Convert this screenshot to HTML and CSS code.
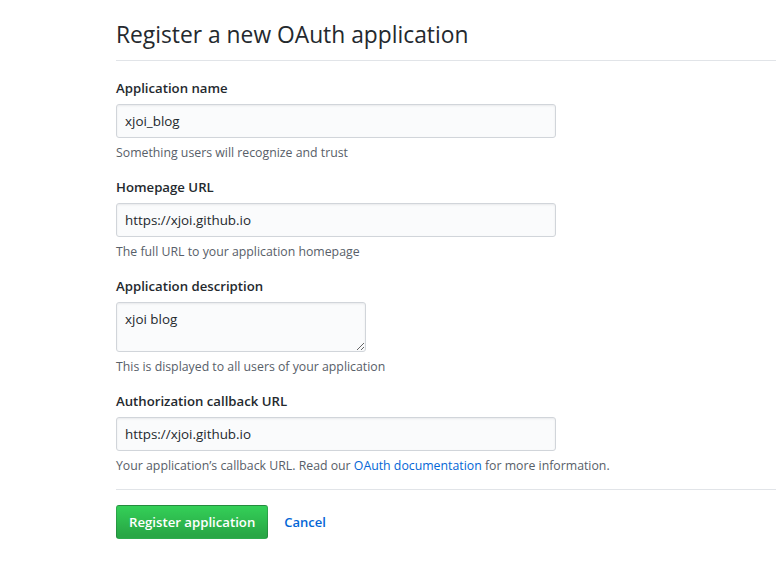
FILE: index.html
```html
<!DOCTYPE html>
<html>
<head>
<meta charset="utf-8">
<link rel="stylesheet" href="styles.css">
</head>
<body>
<div class="page">
  <h1 class="subhead">Register a new OAuth application</h1>
  <form class="form">
    <div class="group">
      <label class="label">Application name</label>
      <input class="control" type="text" value="xjoi_blog">
      <p class="note">Something users will recognize and trust</p>
    </div>
    <div class="group">
      <label class="label">Homepage URL</label>
      <input class="control" type="text" value="https://xjoi.github.io">
      <p class="note">The full URL to your application homepage</p>
    </div>
    <div class="group">
      <label class="label">Application description</label>
      <textarea class="control area">xjoi blog</textarea>
      <p class="note">This is displayed to all users of your application</p>
    </div>
    <div class="group">
      <label class="label">Authorization callback URL</label>
      <input class="control" type="text" value="https://xjoi.github.io">
      <p class="note">Your application’s callback URL. Read our <a class="link" href="#">OAuth documentation</a> for more information.</p>
    </div>
    <div class="actions">
      <button class="btn" type="button">Register application</button>
      <a class="cancel" href="#">Cancel</a>
    </div>
  </form>
</div>
</body>
</html>
```
FILE: styles.css
```css
html, body {
  margin: 0;
  padding: 0;
  background: #fff;
}
body {
  font-family: "Open Sans", "Noto Sans", "Liberation Sans", sans-serif;
  color: #24292e;
  overflow: hidden;
}
.page {
  padding: 20px 0 0 116px;
}
.subhead {
  margin: 0;
  font-size: 22.8px;
  font-weight: 400;
  line-height: 30px;
  padding-bottom: 10px;
  border-bottom: 1px solid #e1e4e8;
}
.form {
  margin: 0;
  padding-top: 17px;
}
.group {
  display: flex;
  flex-direction: column;
  align-items: flex-start;
  margin-bottom: 15px;
}
.label {
  font-size: 13.2px;
  font-weight: 600;
  line-height: 20px;
  margin-bottom: 6px;
}
.control {
  box-sizing: border-box;
  width: 440px;
  height: 34px;
  padding: 6px 8px;
  font-family: inherit;
  font-size: 13.4px;
  line-height: 20px;
  color: #24292e;
  background: #fafbfc;
  border: 1px solid #d1d5da;
  border-radius: 3px;
  box-shadow: inset 0 1px 2px rgba(27,31,35,0.075);
  outline: none;
  margin: 0;
}
.area {
  width: 250px;
  height: 50px;
  resize: both;
}
.note {
  margin: 6px 0 0;
  font-size: 12.3px;
  line-height: 18px;
  color: #586069;
}
.link {
  color: #0366d6;
  text-decoration: none;
}
.actions {
  display: flex;
  align-items: center;
  gap: 16px;
  margin-top: -1px;
  padding-top: 15px;
  border-top: 1px solid #e1e4e8;
}
.btn {
  box-sizing: border-box;
  height: 34px;
  padding: 6px 12px;
  font-family: inherit;
  font-size: 13.2px;
  font-weight: 600;
  line-height: 20px;
  color: #fff;
  background: linear-gradient(180deg, #34d058 0%, #28a745 90%);
  border: 1px solid rgba(27,31,35,0.2);
  border-radius: 3px;
}
.cancel {
  font-size: 13px;
  font-weight: 600;
  color: #0366d6;
  text-decoration: none;
}
```
